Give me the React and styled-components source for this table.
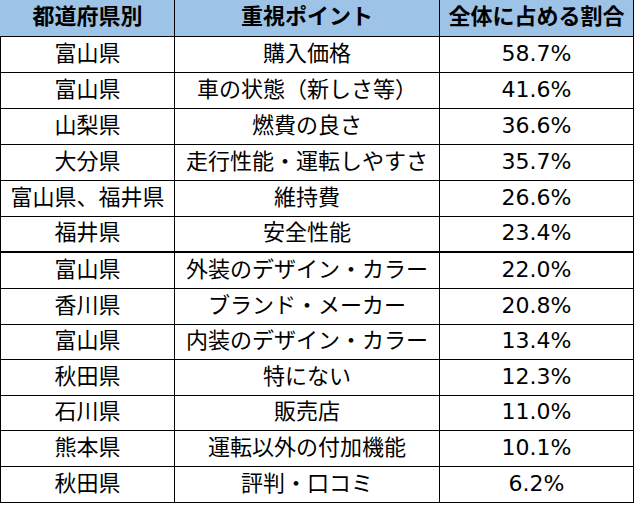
import React from "react";
import styled, { createGlobalStyle } from "styled-components";

const Global = createGlobalStyle`
  html, body { margin: 0; padding: 0; background: #fff; }
  body { font-family: "DejaVu Sans", "Noto Sans CJK JP", sans-serif; color: #000; }
`;

const Table = styled.div`
  width: 634px;
  display: flex;
  flex-direction: column;
`;

const Row = styled.div`
  display: grid;
  grid-template-columns: 175px 265px 194px;
  height: ${(p) => p.$h}px;
  background: ${(p) => (p.$head ? "#9dc3e6" : "#fff")};
  border-bottom: ${(p) => p.$line}px solid #000;
  box-sizing: border-box;
`;

const Cell = styled.div`
  display: flex;
  align-items: center;
  justify-content: center;
  box-sizing: border-box;
  border-right: 1px solid #000;
  border-left: ${(p) => (p.$first ? (p.$head ? "1px solid #9dc3e6" : "1px solid #000") : "none")};
  font-size: 22px;
  font-weight: ${(p) => (p.$head ? 700 : 400)};
  white-space: nowrap;
  line-height: 1;
  padding-bottom: 2px;
`;

const rows = [
  ["富山県", "購入価格", "58.7%"],
  ["富山県", "車の状態（新しさ等）", "41.6%"],
  ["山梨県", "燃費の良さ", "36.6%"],
  ["大分県", "走行性能・運転しやすさ", "35.7%"],
  ["富山県、福井県", "維持費", "26.6%"],
  ["福井県", "安全性能", "23.4%"],
  ["富山県", "外装のデザイン・カラー", "22.0%"],
  ["香川県", "ブランド・メーカー", "20.8%"],
  ["富山県", "内装のデザイン・カラー", "13.4%"],
  ["秋田県", "特にない", "12.3%"],
  ["石川県", "販売店", "11.0%"],
  ["熊本県", "運転以外の付加機能", "10.1%"],
  ["秋田県", "評判・口コミ", "6.2%"],
];

const heights = [36, 36, 36, 36, 36, 36, 36, 36, 35, 36, 35, 36, 36];

export default function App() {
  return (
    <>
      <Global />
      <Table>
        <Row $head $h={37} $line={1}>
          <Cell $head $first>都道府県別</Cell>
          <Cell $head>重視ポイント</Cell>
          <Cell $head>全体に占める割合</Cell>
        </Row>
        {rows.map((r, i) => (
          <Row key={i} $h={heights[i]} $line={i === 5 ? 2 : 1}>
            <Cell $first>{r[0]}</Cell>
            <Cell>{r[1]}</Cell>
            <Cell>{r[2]}</Cell>
          </Row>
        ))}
      </Table>
    </>
  );
}
